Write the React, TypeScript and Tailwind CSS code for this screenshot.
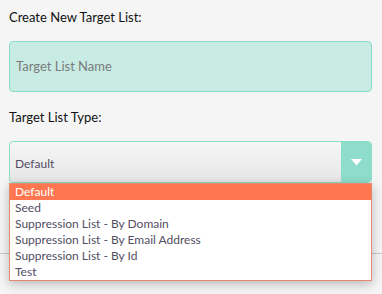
export default function App() {
  const options = [
    "Default",
    "Seed",
    "Suppression List - By Domain",
    "Suppression List - By Email Address",
    "Suppression List - By Id",
    "Test",
  ];

  return (
    <div className="w-[382px] h-[294px] bg-[#f5f5f5] overflow-hidden font-['Lato','Open_Sans',sans-serif] relative">
      <div className="px-[9px] pt-[9px]">
        <label className="block text-[13px] leading-[16px] text-[#111]">Create New Target List:</label>
        <div className="mt-[16px] h-[51px] w-[363px] rounded-[4px] border border-[#8ddcc6] bg-[#c8ebe4] flex items-center pl-[6px]">
          <span className="text-[13px] text-[#7b7b7b]">Target List Name</span>
        </div>
        <label className="block mt-[17px] text-[13px] leading-[16px] text-[#111]">Target List Type:</label>
        <div className="relative mt-[16px] w-[363px]">
          <div className="h-[42px] rounded-[4px] border border-[#8ddcc6] bg-gradient-to-b from-[#f6f6f6] to-[#e6e6e6] flex items-stretch overflow-hidden">
            <div className="flex-1 flex items-center pl-[5px] pt-[4px]">
              <span className="text-[12px] text-[#534d64]">Default</span>
            </div>
            <div className="w-[30px] bg-[#8edccb] flex items-center justify-center">
              <svg width="11" height="7" viewBox="0 0 11 7">
                <polygon points="0,0 11,0 5.5,6.5" fill="#fff" />
              </svg>
            </div>
          </div>
          <div className="absolute left-0 top-[42px] w-[363px] bg-white border border-[#e48a70] shadow-[0_3px_10px_rgba(0,0,0,0.25)] z-10">
            {options.map((o, i) => (
              <div
                key={o}
                className={
                  i === 0
                    ? "h-[16px] leading-[16px] pl-[5px] text-[12px] bg-[#ff7650] text-white"
                    : "h-[16px] leading-[16px] pl-[5px] text-[12px] text-[#534d64]"
                }
              >
                {o}
              </div>
            ))}
          </div>
        </div>
      </div>
      <div className="absolute left-0 right-0 top-[253px] border-t border-[#c8c8c8]" />
    </div>
  );
}
